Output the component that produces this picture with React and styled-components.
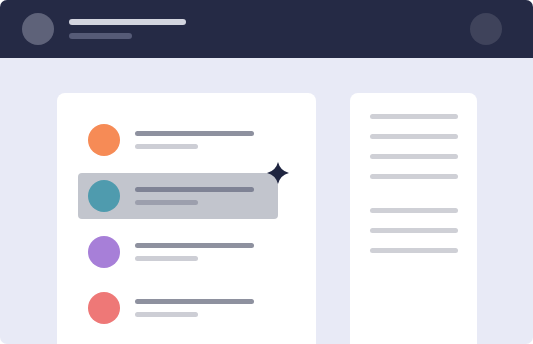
import React from 'react';
import styled, { createGlobalStyle } from 'styled-components';

const GlobalStyle = createGlobalStyle`
  html, body {
    margin: 0;
    padding: 0;
    background: #ffffff;
    font-family: "Inter", "Liberation Sans", sans-serif;
  }
`;

const items = [
  { color: '#f68b56' },
  { color: '#4f9bae', active: true },
  { color: '#a77fd8' },
  { color: '#ee7877' },
];

const sideLines = [[1, 2, 3, 4], [5, 6, 7]];

const Star = () => (
  <svg width="22" height="22" viewBox="0 0 22 22">
    <path d="M11 0 Q13.2 8.8 22 11 Q13.2 13.2 11 22 Q8.8 13.2 0 11 Q8.8 8.8 11 0 Z" fill="#1f2540" />
  </svg>
);

export default function App() {
  return (
    <>
      <GlobalStyle />
      <Window>
        <Header>
          <Avatar />
          <TitleBlock>
            <Bar $w={117} $h={6} $c="#d3d5df" />
            <Bar $w={63} $h={6} $c="#565b77" />
          </TitleBlock>
          <Avatar $dim />
        </Header>
        <Body>
          <ListCard>
            {items.map((it, i) => (
              <Row key={i} $active={it.active}>
                <Dot $c={it.color} />
                <TitleBlock>
                  <Bar $w={119} $h={5} $c={it.active ? '#7f8395' : '#8e919f'} />
                  <Bar $w={63} $h={5} $c={it.active ? '#9c9fad' : '#cdced5'} />
                </TitleBlock>
                {it.active && (
                  <StarSpot>
                    <Star />
                  </StarSpot>
                )}
              </Row>
            ))}
          </ListCard>
          <SideCard>
            {sideLines.map((group, g) => (
              <Group key={g}>
                {group.map((n) => (
                  <Bar key={n} $w={88} $h={5} $c="#cfd0d6" />
                ))}
              </Group>
            ))}
          </SideCard>
        </Body>
      </Window>
    </>
  );
}

const Window = styled.div`
  width: 533px;
  height: 344px;
  border-radius: 7px;
  overflow: hidden;
  background: #e8eaf6;
  display: flex;
  flex-direction: column;
`;

const Header = styled.header`
  height: 58px;
  flex-shrink: 0;
  background: #252a45;
  display: flex;
  align-items: center;
  padding: 0 31px 0 22px;
  box-sizing: border-box;
  gap: 15px;
`;

const Avatar = styled.div`
  width: 32px;
  height: 32px;
  border-radius: 50%;
  background: ${(p) => (p.$dim ? '#3f435b' : '#5e6279')};
  margin-left: ${(p) => (p.$dim ? 'auto' : '0')};
`;

const TitleBlock = styled.div`
  display: flex;
  flex-direction: column;
  gap: 8px;
`;

const Bar = styled.div`
  width: ${(p) => p.$w}px;
  height: ${(p) => p.$h}px;
  border-radius: 3px;
  background: ${(p) => p.$c};
`;

const Body = styled.main`
  flex: 1;
  display: flex;
  gap: 34px;
  padding: 35px 0 0 57px;
  overflow: hidden;
`;

const ListCard = styled.section`
  width: 259px;
  height: 300px;
  background: #ffffff;
  border-radius: 8px;
  padding: 24px 21px;
  box-sizing: border-box;
  display: flex;
  flex-direction: column;
  gap: 10px;
`;

const Row = styled.div`
  position: relative;
  width: 200px;
  height: 46px;
  box-sizing: border-box;
  padding: 0 10px;
  display: flex;
  align-items: center;
  gap: 15px;
  border-radius: 4px;
  background: ${(p) => (p.$active ? '#c2c5cd' : 'transparent')};
`;

const Dot = styled.div`
  width: 32px;
  height: 32px;
  border-radius: 50%;
  background: ${(p) => p.$c};
`;

const StarSpot = styled.div`
  position: absolute;
  top: -11px;
  right: -11px;
  width: 22px;
  height: 22px;
`;

const SideCard = styled.aside`
  width: 127px;
  height: 300px;
  background: #ffffff;
  border-radius: 8px;
  padding: 21px 20px;
  box-sizing: border-box;
  display: flex;
  flex-direction: column;
  gap: 29px;
`;

const Group = styled.div`
  display: flex;
  flex-direction: column;
  gap: 15px;
`;
